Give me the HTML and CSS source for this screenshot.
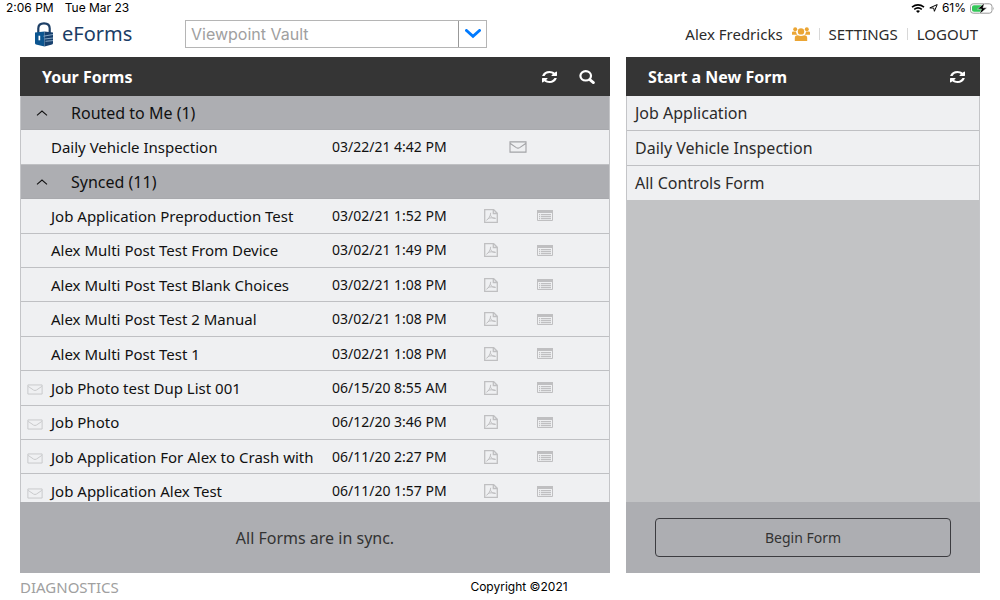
FILE: index.html
```html
<!DOCTYPE html>
<html lang="en">
<head>
<meta charset="utf-8">
<title>eForms</title>
<link rel="stylesheet" href="styles.css">
</head>
<body>
<svg class="defs" aria-hidden="true">
  <symbol id="sync" viewBox="0 0 1536 1536" preserveAspectRatio="none"><path d="M1511 928q0 5-1 7-64 268-268 434.500T764 1536q-146 0-282.500-55T238 1324l-129 129q-19 19-45 19t-45-19-19-45V960q0-26 19-45t45-19h448q26 0 45 19t19 45-19 45l-137 137q71 66 161 102t187 36q134 0 250-65t186-179q11-17 53-117 8-23 30-23h192q13 0 22.500 9.500t9.500 22.500zm25-800v448q0 26-19 45t-45 19h-448q-26 0-45-19t-19-45 19-45l138-138Q969 256 768 256q-134 0-250 65T332 500q-11 17-53 117-8 23-30 23H50q-13 0-22.500-9.500T18 608v-7q65-268 270-434.500T768 0q146 0 284 55.500T1297 212l130-129q19-19 45-19t45 19 19 45z"/></symbol>
  <symbol id="search" viewBox="0 0 16 14" ><ellipse cx="6.700" cy="5.800" rx="5.300" ry="4.700" fill="none" stroke="currentColor" stroke-width="2.200"/><path d="M10.800 9.600l3.600 3" stroke="currentColor" stroke-width="2.800" stroke-linecap="round"/></symbol>
  <symbol id="mail" viewBox="0 0 18 12"><path d="M1 .9h16v10.200H1zM1.300 2.500l6 4.100q1.700 1 3.400 0l6-4.100" fill="none" stroke="currentColor" stroke-width="1.100"/></symbol>
  <symbol id="pdf" viewBox="0 0 14 14"><path d="M.7.700h9l3.600 3.500v9.100H.7zM9.300.900v3.600h3.800" fill="none" stroke="currentColor" stroke-width="1.300"/><path d="M2.400 11.300c2-1 4.200-4.300 4.300-7.500M6.600 6.300c.6 2 2.500 3.300 5 3.200M3.900 9.600c2-.9 4.200-1 7.600-.4" fill="none" stroke="currentColor"/></symbol>
  <symbol id="list" viewBox="0 0 16 11"><path d="M.5.500h15v10H.5z" fill="none" stroke="currentColor"/><path d="M0 0h16v3H0zM2 4h1.200v1.200H2zM2 6h1.200v1.200H2zM2 8h1.200v1.200H2zM4 4h10v1.200H4zM4 6h10v1.200H4zM4 8h10v1.200H4z" fill="currentColor"/></symbol>
  <symbol id="up" viewBox="0 0 12 6"><path d="M1 5.300l5-4.300 5 4.300" fill="none" stroke="currentColor" stroke-width="1.100"/></symbol>
</svg>

<div class="status">
  <div class="status-side"><span>2:06 PM</span><span>Tue Mar 23</span></div>
  <div class="status-side status-right">
    <svg width="14" height="9" viewBox="0 0 14 9"><path d="M1 3.200q6-4.600 12 0M3.200 5.300q3.800-2.800 7.600 0" fill="none" stroke="#000" stroke-width="1.600"/><path d="M5 7q2-1.400 4 0L7 9z"/></svg>
    <svg width="9" height="8" viewBox="0 0 9 8"><path d="M.8 3.900L8.200.600 5.400 7.300 4.700 4.100z" fill="none" stroke="#000"/></svg>
    <span>61%</span>
    <svg width="25" height="11" viewBox="0 0 25 11"><rect x=".5" y=".8" width="21.500" height="9.400" rx="2.700" fill="#fff" stroke="#999"/><path d="M4 2.200h9v6.600H4Q2 8.800 2 7V4q0-1.800 2-1.800z" fill="#34c759"/><path d="M14.500 0L7.500 6h4L9.500 11l7.500-6.200h-4z" stroke="#fff" stroke-width=".5"/><path d="M23.300 3.800q1.400 1.700 0 3.400z" fill="#999"/></svg>
  </div>
</div>

<header class="top">
  <div class="brand">
    <svg width="20" height="25" viewBox="0 0 20 25"><path d="M4.300 11V6.500Q4.300 1.400 10 1.400T15.700 6.500V11" fill="none" stroke="#1d3f66" stroke-width="2.200"/><path d="M1 10.600l9.500-1.200V24.500L2 22.500Q1 22.200 1 21z" fill="#0b5590"/><path d="M10.500 9.400l8.500 1.200V21q0 1.200-1 1.500l-7.500 2z" fill="#17406e"/><path d="M9.500 14.200l9.500-1.700M10.500 17l8.500-1M11.500 19.300l7.500-.7" stroke="#8fb0cc" stroke-width=".9"/><path d="M4.500 13.700h1.700v4.600H4.500z" fill="#fff"/></svg>
    <span class="brand-name">eForms</span>
  </div>
  <div class="picker">
    <select class="picker-select" aria-label="Data source"><option>Viewpoint Vault</option></select>
    <span class="picker-arrow"><svg width="16" height="10" viewBox="0 0 16 10"><path d="M1.500 1.500L8 7.300l6.500-5.800" fill="none" stroke="#007aff" stroke-width="3" stroke-linecap="round"/></svg></span>
  </div>
  <nav class="account">
    <span class="user">Alex Fredricks
      <svg width="18" height="14" viewBox="0 0 18 14" fill="#eba534"><circle cx="3.200" cy="2.200" r="2"/><circle cx="14.800" cy="2.200" r="2"/><path d="M0 7.800V5.600Q0 4.500 1.200 4.500H4Q4 6.500 5.400 7.800zM18 7.800V5.600q0-1.100-1.200-1.100H14q0 2-1.400 3.300z"/><circle cx="9" cy="4.400" r="3.200"/><path d="M2.800 14v-3q0-2.700 2.900-2.700Q9 9.500 12.300 8.300q2.900 0 2.900 2.700v3z"/></svg>
    </span>
    <a class="nav-link" href="#settings">SETTINGS</a>
    <a class="nav-link" href="#logout">LOGOUT</a>
  </nav>
</header>

<main class="panels">
  <section class="panel">
    <div class="panel-head">
      <h2 class="panel-title">Your Forms</h2>
      <button class="icon-btn" aria-label="Refresh forms"><svg width="15" height="12"><use href="#sync"/></svg></button>
      <button class="icon-btn" aria-label="Search forms"><svg width="16" height="14"><use href="#search"/></svg></button>
    </div>
    <div class="scroll">
      <table class="forms">
        <colgroup><col class="c-flag"><col><col class="c-date"><col class="c-icon"><col class="c-icon"><col class="c-end"></colgroup>
        <tbody>
          <tr class="group"><th colspan="6"><button class="toggle"><svg width="12" height="6"><use href="#up"/></svg>Routed to Me (1)</button></th></tr>
          <tr><td></td><td>Daily Vehicle Inspection</td><td class="date">03/22/21 4:42 PM</td><td class="icon sent" colspan="2"><svg width="18" height="12"><use href="#mail"/></svg></td><td></td></tr>
          <tr class="group"><th colspan="6"><button class="toggle"><svg width="12" height="6"><use href="#up"/></svg>Synced (11)</button></th></tr>
          <tr><td></td><td>Job Application Preproduction Test</td><td class="date">03/02/21 1:52 PM</td><td class="icon"><svg width="14" height="14"><use href="#pdf"/></svg></td><td class="icon"><svg width="16" height="11"><use href="#list"/></svg></td><td></td></tr>
          <tr><td></td><td>Alex Multi Post Test From Device</td><td class="date">03/02/21 1:49 PM</td><td class="icon"><svg width="14" height="14"><use href="#pdf"/></svg></td><td class="icon"><svg width="16" height="11"><use href="#list"/></svg></td><td></td></tr>
          <tr><td></td><td>Alex Multi Post Test Blank Choices</td><td class="date">03/02/21 1:08 PM</td><td class="icon"><svg width="14" height="14"><use href="#pdf"/></svg></td><td class="icon"><svg width="16" height="11"><use href="#list"/></svg></td><td></td></tr>
          <tr><td></td><td>Alex Multi Post Test 2 Manual</td><td class="date">03/02/21 1:08 PM</td><td class="icon"><svg width="14" height="14"><use href="#pdf"/></svg></td><td class="icon"><svg width="16" height="11"><use href="#list"/></svg></td><td></td></tr>
          <tr><td></td><td>Alex Multi Post Test 1</td><td class="date">03/02/21 1:08 PM</td><td class="icon"><svg width="14" height="14"><use href="#pdf"/></svg></td><td class="icon"><svg width="16" height="11"><use href="#list"/></svg></td><td></td></tr>
          <tr><td class="flag"><svg width="16" height="11"><use href="#mail"/></svg></td><td>Job Photo test Dup List 001</td><td class="date">06/15/20 8:55 AM</td><td class="icon"><svg width="14" height="14"><use href="#pdf"/></svg></td><td class="icon"><svg width="16" height="11"><use href="#list"/></svg></td><td></td></tr>
          <tr><td class="flag"><svg width="16" height="11"><use href="#mail"/></svg></td><td>Job Photo</td><td class="date">06/12/20 3:46 PM</td><td class="icon"><svg width="14" height="14"><use href="#pdf"/></svg></td><td class="icon"><svg width="16" height="11"><use href="#list"/></svg></td><td></td></tr>
          <tr><td class="flag"><svg width="16" height="11"><use href="#mail"/></svg></td><td>Job Application For Alex to Crash with</td><td class="date">06/11/20 2:27 PM</td><td class="icon"><svg width="14" height="14"><use href="#pdf"/></svg></td><td class="icon"><svg width="16" height="11"><use href="#list"/></svg></td><td></td></tr>
          <tr><td class="flag"><svg width="16" height="11"><use href="#mail"/></svg></td><td>Job Application Alex Test</td><td class="date">06/11/20 1:57 PM</td><td class="icon"><svg width="14" height="14"><use href="#pdf"/></svg></td><td class="icon"><svg width="16" height="11"><use href="#list"/></svg></td><td></td></tr>
        </tbody>
      </table>
    </div>
    <div class="panel-foot">All Forms are in sync.</div>
  </section>

  <section class="panel">
    <div class="panel-head">
      <h2 class="panel-title">Start a New Form</h2>
      <button class="icon-btn" aria-label="Refresh templates"><svg width="15" height="12"><use href="#sync"/></svg></button>
    </div>
    <div class="scroll">
      <ul class="templates">
        <li><button class="template">Job Application</button></li>
        <li><button class="template">Daily Vehicle Inspection</button></li>
        <li><button class="template">All Controls Form</button></li>
      </ul>
    </div>
    <div class="panel-foot"><button class="begin">Begin Form</button></div>
  </section>
</main>

<footer class="bottom">
  <a class="diag" href="#diagnostics">DIAGNOSTICS</a>
  <span class="copy">Copyright ©2021</span>
</footer>
</body>
</html>
```
FILE: styles.css
```css
* { box-sizing: border-box; }
body {
  margin: 0;
  height: 100vh;
  display: flex;
  flex-direction: column;
  background: #fff;
  color: #111;
  font: 15px/20px "Noto Sans", sans-serif;
}
button, select { font: inherit; color: inherit; background: none; border: 0; border-radius: 0; padding: 0; }
svg { display: block; flex: none; }
.defs { position: absolute; width: 0; height: 0; }

.status {
  display: flex;
  justify-content: space-between;
  height: 16px;
  padding: 0 5px 0 6px;
  font: 12px/16px Inter, sans-serif;
  color: #000;
}
.status-side { display: flex; align-items: center; gap: 11px; }
.status-right { gap: 4px; }

.top {
  display: grid;
  grid-template-columns: 151px 302px 1fr;
  align-items: center;
  height: 41px;
  padding: 0 22px 5px 34px;
}
.brand { display: flex; align-items: center; gap: 8px; }
.brand-name { font-size: 20px; line-height: 24px; color: #1b3d66; }
.picker { display: grid; grid-template-columns: 1fr 28px; height: 28px; border: 1px solid #b5b5b5; }
.picker-select {
  grid-area: 1 / 1 / 2 / 3;
  appearance: none;
  padding-left: 5px;
  color: #a0a0a0;
  font: 16px/20px Inter, sans-serif;
}
.picker-arrow {
  grid-area: 1 / 2;
  display: grid;
  place-items: center;
  border-left: 1px solid #999;
  pointer-events: none;
}
.account { display: flex; justify-content: flex-end; align-items: center; color: #2b2b2b; }
.user { display: flex; align-items: center; gap: 9px; }
.nav-link { display: flex; align-items: center; color: inherit; text-decoration: none; }
.nav-link::before { content: ""; width: 1px; height: 12px; margin: 0 9px; background: #d8d8d8; }

.panels {
  flex: 1;
  min-height: 0;
  display: grid;
  grid-template-columns: 5fr 3fr;
  gap: 16px;
  padding: 0 20px;
}
.panel {
  min-height: 0;
  display: grid;
  grid-template-rows: 39px minmax(0, 1fr) 71px;
  background: #c2c3c5;
}
.panel-head {
  display: flex;
  align-items: center;
  gap: 22px;
  padding: 0 15px 0 22px;
  background: #353535;
  color: #fff;
}
.panel-title { flex: 1; margin: 0; font-size: 16px; line-height: 20px; font-weight: 700; }
.icon-btn { display: grid; place-items: center; fill: #fff; }
.scroll { overflow: hidden; border: solid #c4c5c8; border-width: 0 1px; }
.forms {
  width: 100%;
  height: calc(100% + 7px);
  table-layout: fixed;
  border-collapse: separate;
  border-spacing: 0;
  background: #eff0f2;
}
.forms td, .forms th { padding: 0; height: 34px; border-bottom: 1px solid #bfc0c3; white-space: nowrap; text-align: left; font-weight: 400; }
.forms .group th { background: #adaeb2; border-color: #a8a9ad; font-size: 16px; }
.c-flag { width: 30px; }
.c-date { width: 132px; }
.c-icon { width: 54px; }
.c-end { width: 37px; }
.toggle { display: flex; align-items: center; gap: 23px; width: 100%; padding-left: 15px; }
.forms .date { font-size: 14px; }
.icon svg { margin: 0 auto; color: #bfbfc1; }
.sent svg { color: #a2a3a6; }
.flag svg { margin: 4px 0 0 6px; color: #c8c9cb; }

.templates { margin: 0; padding: 0; list-style: none; background: #eff0f2; color: #2b2b2b; font-size: 16px; }
.template { display: block; width: 100%; height: 34px; padding-left: 8px; text-align: left; }
.templates li { border-bottom: 1px solid #bfc0c3; }
.templates li:last-child { border-bottom: 0; }
.panel-foot {
  display: grid;
  place-items: center;
  padding: 0 29px;
  background: #adaeb2;
  color: #333;
  font-size: 16px;
}
.begin { width: 100%; height: 39px; border: 1px solid #3c3c40; border-radius: 4px; font-size: 14px; }

.bottom {
  display: grid;
  grid-template-columns: 1fr auto 1fr;
  align-items: center;
  height: 27px;
  padding: 0 0 0 20px;
}
.diag { color: #a0a0a0; font-size: 15px; text-decoration: none; }
.copy { padding-left: 18px; color: #000; font: 12px/16px Inter, sans-serif; }
```
